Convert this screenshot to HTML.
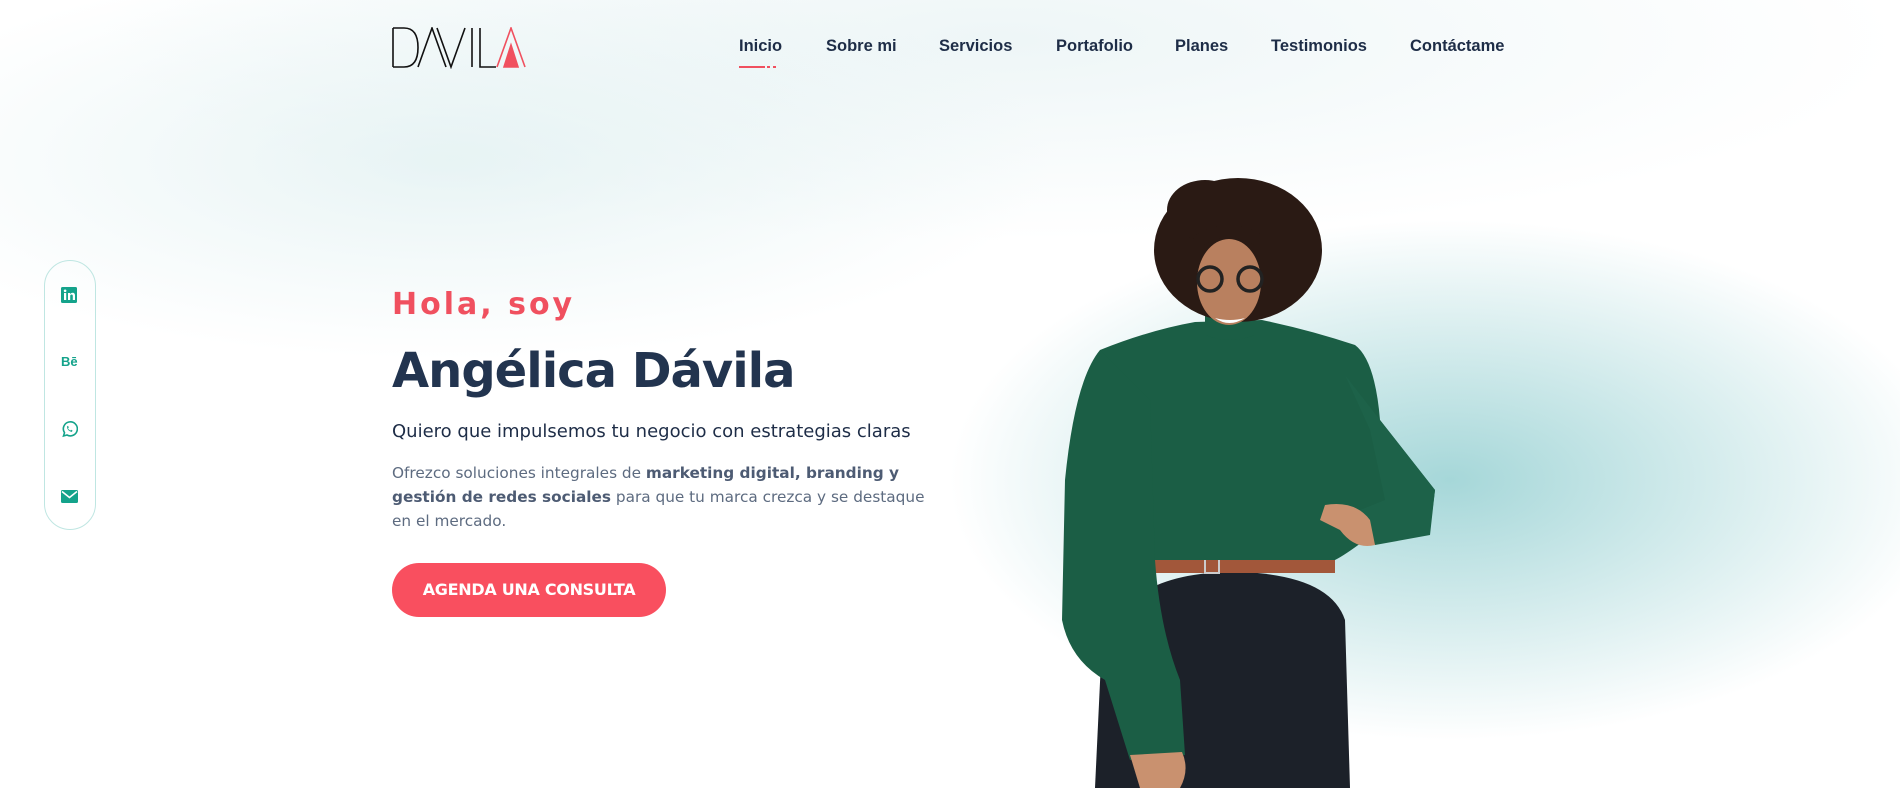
<!DOCTYPE html>
<html><head><meta charset="utf-8"><style>
*{margin:0;padding:0;box-sizing:border-box}
body{width:1900px;height:788px;overflow:hidden;position:relative;font-family:"Liberation Sans",sans-serif;background:#fff}
.bg{position:absolute;inset:0;background:
radial-gradient(ellipse 500px 260px at 1450px 480px,rgba(150,208,210,.85),rgba(150,208,210,0) 100%),
radial-gradient(ellipse 600px 200px at 450px 160px,rgba(222,239,240,.7),rgba(222,239,240,0) 100%),
radial-gradient(ellipse 900px 200px at 1000px 40px,rgba(236,245,246,.9),rgba(236,245,246,0) 100%),#fff}
.nav a{position:absolute;top:37px;font-weight:bold;font-size:16.5px;color:#1e2d47;text-decoration:none}
.pill{position:absolute;left:44px;top:260px;width:52px;height:270px;border:1.5px solid #bfe6e2;border-radius:26px}
.ic{position:absolute;left:61px;color:#14a38b}
.t{position:absolute;left:392px;font-family:"DejaVu Sans","Liberation Sans",sans-serif}
</style></head><body>
<div class="bg"></div>
<svg style="position:absolute;left:392px;top:27px" width="135" height="42" viewBox="0 0 135 42" fill="none" stroke="#111" stroke-width="1.6">
<path d="M1 1V40M1 1H12Q26 1 26 20.5Q26 40 12 40H1"/>
<path d="M26 40L40 1L54 40"/>
<path d="M45 1L59 40L73 1"/>
<path d="M80 1V40"/>
<path d="M88 1V40H104"/>
<path d="M105 40L119 1L133 40" stroke="#f0505f"/>
<path d="M112 40L119 18L126 40Z" fill="#f0505f" stroke="#f0505f"/>
</svg>
<div class="nav">
<a style="left:739px">Inicio</a><a style="left:826px">Sobre mi</a><a style="left:939px">Servicios</a><a style="left:1056px">Portafolio</a><a style="left:1175px">Planes</a><a style="left:1271px">Testimonios</a><a style="left:1410px">Contáctame</a>
</div>
<div style="position:absolute;left:739px;top:66px;width:26px;height:2px;background:#f0505f"></div>
<div style="position:absolute;left:767px;top:66px;width:3px;height:2px;background:#f0505f"></div>
<div style="position:absolute;left:773px;top:66px;width:3px;height:2px;background:#f0505f"></div>
<div class="pill"></div>
<svg class="ic" style="top:287px" width="16" height="16" viewBox="0 0 16 16"><rect width="16" height="16" rx="1.5" fill="#14a38b"/><rect x="3" y="6" width="2.2" height="7" fill="#fff"/><circle cx="4.1" cy="3.8" r="1.3" fill="#fff"/><path d="M7 6h2v1q1-1.3 2.6-1.3Q14 5.7 14 8.5V13h-2.2V9q0-1.5-1.3-1.5T9.2 9v4H7z" fill="#fff"/></svg>
<div class="ic" style="top:354px;font-weight:bold;font-size:13px">Bē</div>
<svg class="ic" style="top:421px" width="17" height="17" viewBox="0 0 17 17" fill="none" stroke="#14a38b" stroke-width="1.6"><path d="M2.5 15l1-3.3A7 7 0 1 1 6 14z"/><path d="M6 5.5q0 4 4.5 5.5l1.2-1.3-1.6-.9-.8.8q-1.7-.8-2.3-2.4l.8-.8-.8-1.6z" fill="#14a38b" stroke="none"/></svg>
<svg class="ic" style="top:490px" width="17" height="13" viewBox="0 0 17 13"><rect width="17" height="13" rx="1.5" fill="#14a38b"/><path d="M1 1.5l7.5 6 7.5-6" stroke="#fff" stroke-width="1.6" fill="none"/></svg>
<div class="t" style="top:287px;font-size:30px;font-weight:600;color:#f0505f;letter-spacing:3px">Hola, soy</div>
<div class="t" style="top:343px;font-size:48px;font-weight:bold;color:#22344f;letter-spacing:-1px">Angélica Dávila</div>
<div class="t" style="top:421px;font-size:18px;color:#1e2d47">Quiero que impulsemos tu negocio con estrategias claras</div>
<div class="t" style="top:461px;font-size:15.3px;color:#5d6b80;line-height:24px;width:550px">Ofrezco soluciones integrales de <b style="color:#4d5b73">marketing digital, branding y gestión de redes sociales</b> para que tu marca crezca y se destaque en el mercado.</div>
<div style="position:absolute;left:392px;top:563px;width:274px;height:54px;border-radius:27px;background:#f94f5f;color:#fff;font-weight:bold;font-size:16px;text-align:center;line-height:54px;font-family:'DejaVu Sans',sans-serif;letter-spacing:-.3px">AGENDA UNA CONSULTA</div>
<svg style="position:absolute;left:0;top:0" width="1900" height="788">
<path d="M1095 788L1102 640Q1130 570 1240 572Q1330 575 1345 620L1350 788Z" fill="#1c2129"/>
<path d="M1140 558H1335V573H1140Z" fill="#a2573a"/>
<rect x="1205" y="557" width="14" height="16" fill="none" stroke="#ccc" stroke-width="2"/>
<path d="M1100 350Q1150 330 1195 322L1262 320Q1310 330 1355 345Q1375 360 1380 420L1435 490L1430 530L1365 540Q1345 555 1335 560H1140L1110 560Q1100 520 1098 470Z" fill="#1b5e45"/>
<path d="M1100 350Q1075 380 1065 480L1062 620Q1070 660 1105 680L1130 760L1185 755L1180 680Q1160 630 1155 560L1150 400Z" fill="#1b5e45"/>
<path d="M1345 375L1380 420L1435 490L1430 535L1375 545L1360 510L1385 500L1370 430Z" fill="#1d6249"/>
<path d="M1325 505Q1355 500 1370 520L1375 545Q1355 550 1340 530L1320 520Z" fill="#c9916f"/>
<path d="M1130 755L1182 752Q1190 770 1180 788H1140Z" fill="#c9916f"/>
<path d="M1205 300H1255V335Q1230 345 1205 335Z" fill="#1b5e45"/>
<ellipse cx="1238" cy="250" rx="84" ry="72" fill="#2a1a14"/>
<ellipse cx="1205" cy="210" rx="38" ry="30" fill="#2a1a14"/>
<ellipse cx="1229" cy="282" rx="32" ry="43" fill="#b9805f"/>
<path d="M1196 250Q1229 225 1262 250L1262 235Q1229 215 1196 235Z" fill="#2a1a14"/>
<circle cx="1210" cy="279" r="12" fill="none" stroke="#222" stroke-width="3.5"/>
<circle cx="1250" cy="279" r="12" fill="none" stroke="#222" stroke-width="3.5"/>
<path d="M1215 318Q1229 328 1245 318Q1230 322 1215 318Z" fill="#fff"/>
</svg>
</body></html>
